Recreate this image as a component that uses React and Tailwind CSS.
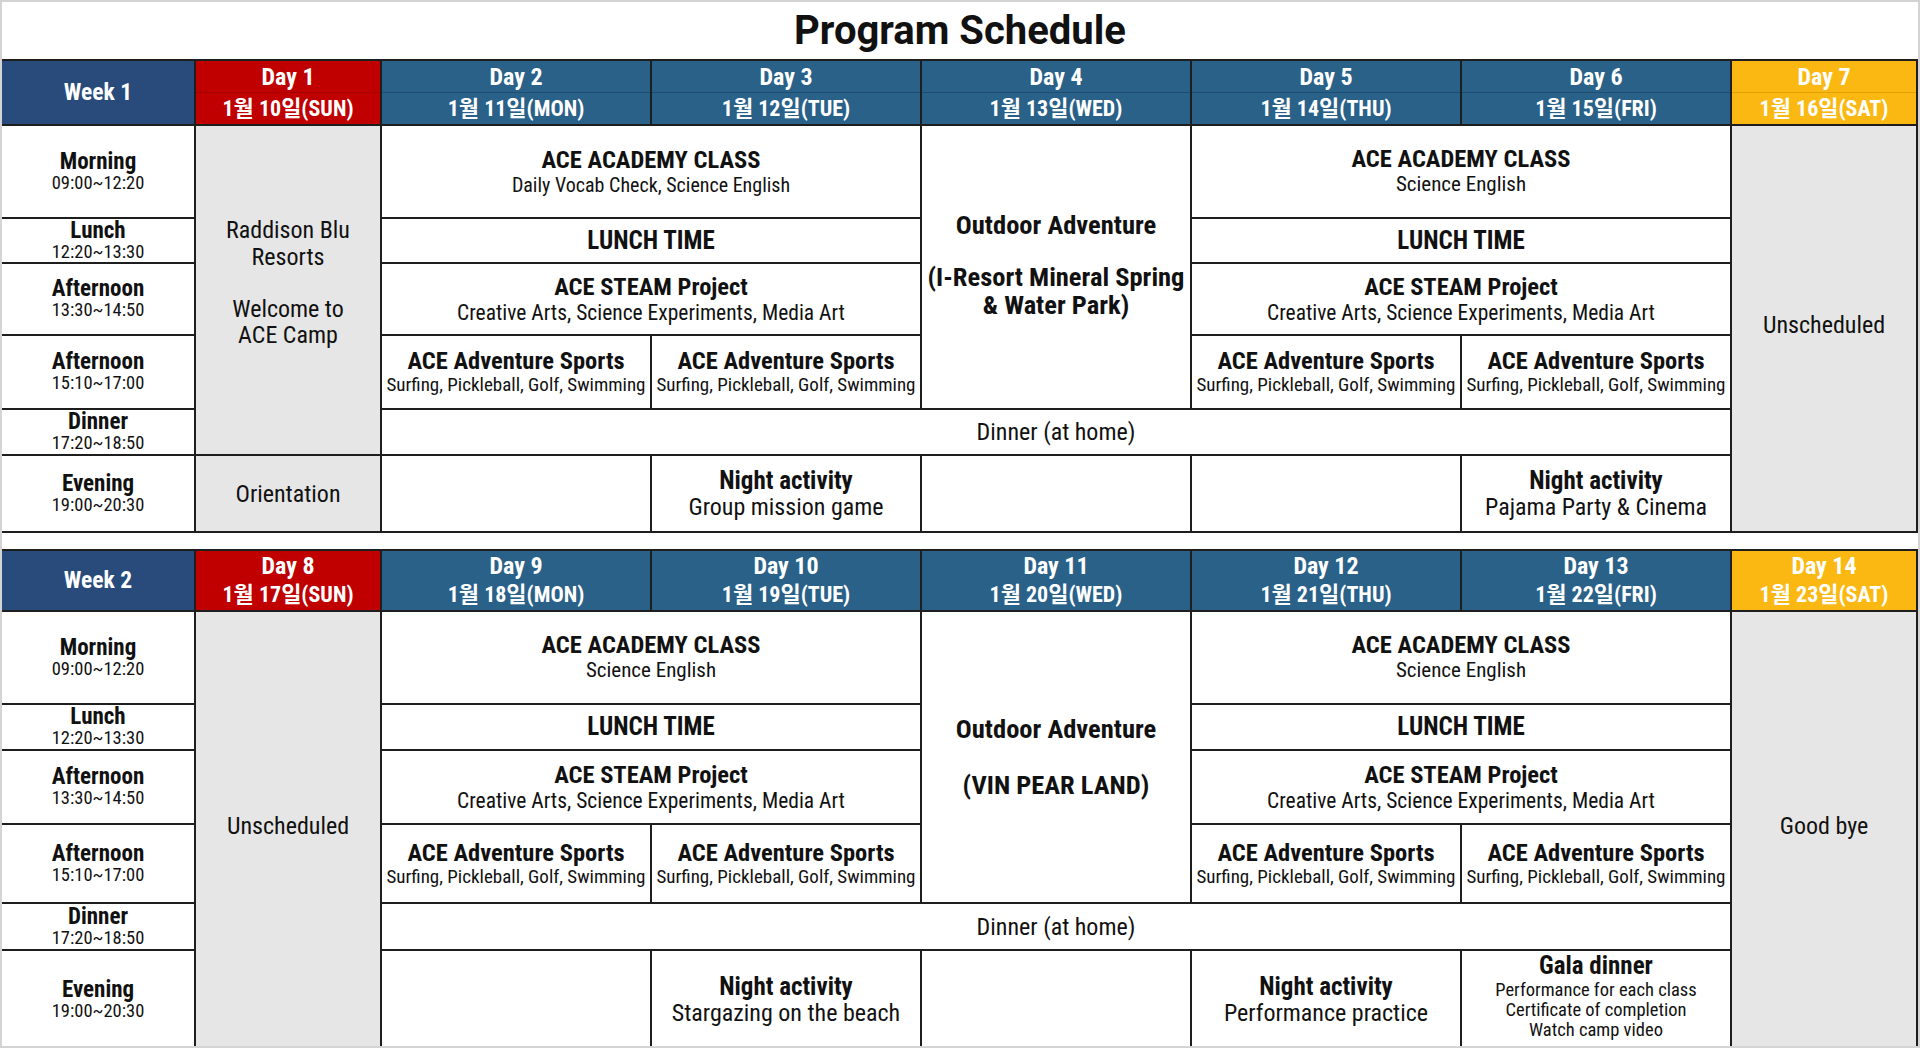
import React from "react";

const F = "font-['Roboto_Condensed','Noto_Sans_CJK_KR',sans-serif]";

function Head({ day, date, bg, line, week2, className = "" }) {
  return (
    <div className={`${bg} ${className} flex flex-col text-white font-bold leading-none`}>
      <div className={`flex-1 flex items-center justify-center text-[24px] ${week2 ? "" : `border-b ${line}`}`}>{day}</div>
      <div className="flex-1 flex items-center justify-center text-[22px]">{date}</div>
    </div>
  );
}

function Label({ name, time, className }) {
  return (
    <div className={`bg-white col-start-1 flex flex-col items-center justify-center leading-[1.05] ${className}`}>
      <div className="font-bold text-[23px]">{name}</div>
      <div className="text-[18.5px]">{time}</div>
    </div>
  );
}

function Block({ title, sub, className = "", subSize = "text-[21px]", titleSize = "text-[24.5px]" }) {
  return (
    <div className={`bg-white flex flex-col items-center justify-center text-center leading-[1.1] ${className}`}>
      <div className={`font-bold ${titleSize}`}>{title}</div>
      {sub && <div className={subSize}>{sub}</div>}
    </div>
  );
}

function Sports({ className }) {
  return (
    <div className={`bg-white flex flex-col items-center justify-center text-center leading-[1.1] ${className}`}>
      <div className="font-bold text-[24.5px]">ACE Adventure Sports</div>
      <div className="text-[19px] whitespace-nowrap">Surfing, Pickleball, Golf, Swimming</div>
    </div>
  );
}

function Heads({ days, week2, n }) {
  return (
    <>
      <div className="bg-[#284b7c] text-white font-bold text-[23.5px] flex items-center justify-center col-start-1 row-start-1">
        Week {n}
      </div>
      <Head className="col-start-2 row-start-1" day={days[0][0]} date={days[0][1]} bg="bg-[#c00000]" line="border-[#a40000]" week2={week2} />
      <Head className="col-start-3 row-start-1" day={days[1][0]} date={days[1][1]} bg="bg-[#296189]" line="border-[#1d4e72]" week2={week2} />
      <Head className="col-start-4 row-start-1" day={days[2][0]} date={days[2][1]} bg="bg-[#296189]" line="border-[#1d4e72]" week2={week2} />
      <Head className="col-start-5 row-start-1" day={days[3][0]} date={days[3][1]} bg="bg-[#296189]" line="border-[#1d4e72]" week2={week2} />
      <Head className="col-start-6 row-start-1" day={days[4][0]} date={days[4][1]} bg="bg-[#296189]" line="border-[#1d4e72]" week2={week2} />
      <Head className="col-start-7 row-start-1" day={days[5][0]} date={days[5][1]} bg="bg-[#296189]" line="border-[#1d4e72]" week2={week2} />
      <Head className="col-start-8 row-start-1" day={days[6][0]} date={days[6][1]} bg="bg-[#fbb812]" line="border-[#e0a200]" week2={week2} />
      <Label className="row-start-2" name="Morning" time="09:00~12:20" />
      <Label className="row-start-3" name="Lunch" time="12:20~13:30" />
      <Label className="row-start-4" name="Afternoon" time="13:30~14:50" />
      <Label className="row-start-5" name="Afternoon" time="15:10~17:00" />
      <Label className="row-start-6" name="Dinner" time="17:20~18:50" />
      <Label className="row-start-7" name="Evening" time="19:00~20:30" />
    </>
  );
}

function Common({ academy, academySize }) {
  return (
    <>
      <Block className="col-start-3 col-span-2 row-start-2" title="ACE ACADEMY CLASS" sub={academy} subSize={academySize} />
      <Block className="col-start-3 col-span-2 row-start-3" title="LUNCH TIME" titleSize="text-[25px]" />
      <Block className="col-start-3 col-span-2 row-start-4" title="ACE STEAM Project" sub="Creative Arts, Science Experiments, Media Art" subSize="text-[21.5px]" />
      <Sports className="col-start-3 row-start-5" />
      <Sports className="col-start-4 row-start-5" />
      <Block className="col-start-6 col-span-2 row-start-2" title="ACE ACADEMY CLASS" sub="Science English" />
      <Block className="col-start-6 col-span-2 row-start-3" title="LUNCH TIME" titleSize="text-[25px]" />
      <Block className="col-start-6 col-span-2 row-start-4" title="ACE STEAM Project" sub="Creative Arts, Science Experiments, Media Art" subSize="text-[21.5px]" />
      <Sports className="col-start-6 row-start-5" />
      <Sports className="col-start-7 row-start-5" />
      <div className="col-start-3 col-span-5 row-start-6 bg-white flex items-center justify-center text-[24px]">Dinner (at home)</div>
    </>
  );
}

export default function App() {
  const w1days = [
    ["Day 1", "1월 10일(SUN)"],
    ["Day 2", "1월 11일(MON)"],
    ["Day 3", "1월 12일(TUE)"],
    ["Day 4", "1월 13일(WED)"],
    ["Day 5", "1월 14일(THU)"],
    ["Day 6", "1월 15일(FRI)"],
    ["Day 7", "1월 16일(SAT)"],
  ];
  const w2days = [
    ["Day 8", "1월 17일(SUN)"],
    ["Day 9", "1월 18일(MON)"],
    ["Day 10", "1월 19일(TUE)"],
    ["Day 11", "1월 20일(WED)"],
    ["Day 12", "1월 21일(THU)"],
    ["Day 13", "1월 22일(FRI)"],
    ["Day 14", "1월 23일(SAT)"],
  ];

  const grid =
    "grid bg-[#1e1e1e] gap-[2px] border-2 border-l-0 border-[#1e1e1e] grid-cols-[192px_184px_repeat(5,minmax(0,1fr))_184px]";

  return (
    <div className={`${F} w-[1920px] h-[1048px] overflow-hidden bg-white border-2 border-[#d4d4d4] text-[#111] flex flex-col`}>
      <div className="h-[57px] shrink-0 flex items-center justify-center font-['Roboto',sans-serif] font-bold text-[40px] text-[#111] leading-none">
        Program Schedule
      </div>

      {/* Week 1 */}
      <div className={`${grid} shrink-0 grid-rows-[63px_91px_43px_70px_72px_44px_75px]`}>
        <Heads days={w1days} n={1} week2={false} />
        <div className="col-start-2 row-start-2 row-span-5 bg-[#e6e6e6] flex flex-col items-center justify-center text-center text-[24px] leading-[1.12] pb-[14px]">
          <div>Raddison Blu</div>
          <div>Resorts</div>
          <div className="h-[25px]" />
          <div>Welcome to</div>
          <div>ACE Camp</div>
        </div>
        <div className="col-start-2 row-start-7 bg-[#e6e6e6] flex items-center justify-center text-[24px]">Orientation</div>

        <Common academy="Daily Vocab Check, Science English" academySize="text-[20px]" />

        <div className="col-start-5 row-start-2 row-span-4 bg-white flex flex-col items-center justify-center text-center font-bold text-[26.5px] leading-[1.06] pb-[4px]">
          <div>Outdoor Adventure</div>
          <div className="h-[24px]" />
          <div className="whitespace-nowrap">(I-Resort Mineral Spring</div>
          <div>&amp; Water Park)</div>
        </div>

        <div className="col-start-3 row-start-7 bg-white" />
        <Block className="col-start-4 row-start-7" title="Night activity" titleSize="text-[25px]" sub="Group mission game" subSize="text-[24px]" />
        <div className="col-start-5 row-start-7 bg-white" />
        <div className="col-start-6 row-start-7 bg-white" />
        <Block className="col-start-7 row-start-7" title="Night activity" titleSize="text-[25px]" sub="Pajama Party & Cinema" subSize="text-[24px]" />

        <div className="col-start-8 row-start-2 row-span-6 bg-[#e6e6e6] flex items-center justify-center text-[24px] pb-[8px]">
          Unscheduled
        </div>
      </div>

      <div className="h-[16px] shrink-0" />

      {/* Week 2 */}
      <div className={`${grid} border-b-0 grid-rows-[59px_91px_44px_72px_77px_45px_97px]`}>
        <Heads days={w2days} n={2} week2={true} />
        <div className="col-start-2 row-start-2 row-span-6 bg-[#e6e6e6] flex items-center justify-center text-[24px] pb-[8px]">
          Unscheduled
        </div>

        <Common academy="Science English" academySize="text-[21px]" />

        <div className="col-start-5 row-start-2 row-span-4 bg-white flex flex-col items-center justify-center text-center font-bold text-[26.5px] leading-[1.06]">
          <div>Outdoor Adventure</div>
          <div className="h-[27px]" />
          <div>(VIN PEAR LAND)</div>
        </div>

        <div className="col-start-3 row-start-7 bg-white" />
        <Block className="col-start-4 row-start-7" title="Night activity" titleSize="text-[25px]" sub="Stargazing on the beach" subSize="text-[24px]" />
        <div className="col-start-5 row-start-7 bg-white" />
        <Block className="col-start-6 row-start-7" title="Night activity" titleSize="text-[25px]" sub="Performance practice" subSize="text-[24px]" />
        <div className="col-start-7 row-start-7 bg-white flex flex-col items-center justify-center text-center leading-[1.1] pb-[6px]">
          <div className="font-bold text-[25px]">Gala dinner</div>
          <div className="text-[18.5px]">Performance for each class</div>
          <div className="text-[18.5px]">Certificate of completion</div>
          <div className="text-[18.5px]">Watch camp video</div>
        </div>

        <div className="col-start-8 row-start-2 row-span-6 bg-[#e6e6e6] flex items-center justify-center text-[24px] pb-[8px]">
          Good bye
        </div>
      </div>
    </div>
  );
}
